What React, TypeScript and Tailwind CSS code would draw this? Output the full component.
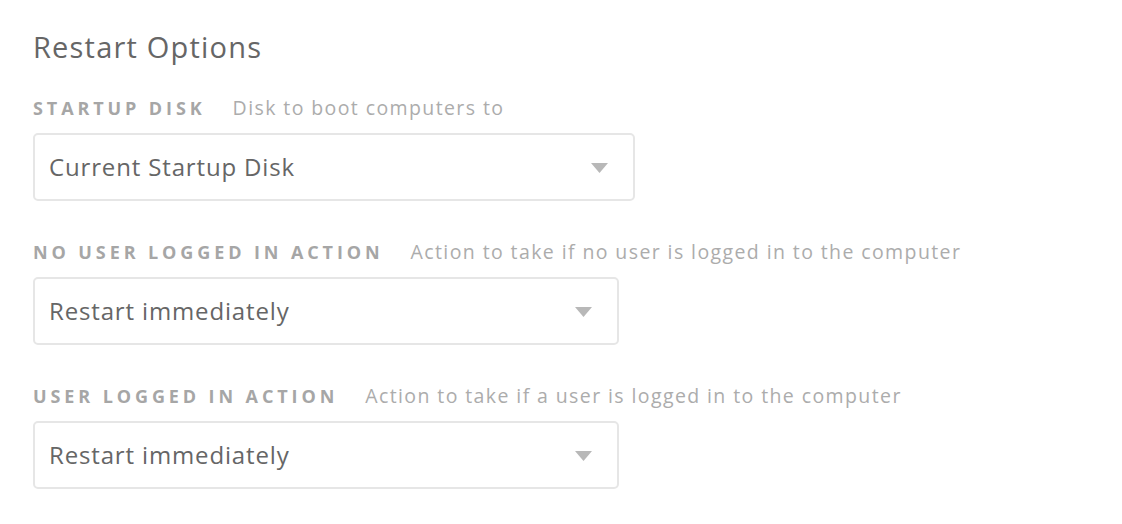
import React from "react";

function Select({ value, width }: { value: string; width: string }) {
  return (
    <div
      className={`flex h-[68px] items-center justify-between rounded-[5px] border-2 border-[#e6e6e6] bg-white pl-[14px] pr-[25px] ${width}`}
    >
      <span className="text-[24px] tracking-[0.85px] text-[#666666]">{value}</span>
      <svg width="17" height="10" viewBox="0 0 17 10" className="mt-[2px]">
        <polygon points="0,0 17,0 8.5,10" fill="#b8b8b8" />
      </svg>
    </div>
  );
}

function Field({
  label,
  desc,
  value,
  width,
}: {
  label: string;
  desc: string;
  value: string;
  width: string;
}) {
  return (
    <div className="flex flex-col">
      <div className="flex h-[30px] items-baseline gap-[27px]">
        <span className="text-[18px] font-bold tracking-[3.9px] text-[#a6a6a6]">{label}</span>
        <span className="text-[19.5px] tracking-[1.4px] text-[#acacac]">{desc}</span>
      </div>
      <div className="mt-[10px]">
        <Select value={value} width={width} />
      </div>
    </div>
  );
}

export default function App() {
  return (
    <div
      className="min-h-[524px] w-[1122px] bg-white pl-[33px] pt-[28px]"
      style={{ fontFamily: "'Open Sans', sans-serif" }}
    >
      <h1 className="text-[29px] leading-[38px] tracking-[1.2px] text-[#666666]">Restart Options</h1>
      <div className="mt-[27px] flex flex-col gap-[36px]">
        <Field
          label="STARTUP DISK"
          desc="Disk to boot computers to"
          value="Current Startup Disk"
          width="w-[602px]"
        />
        <Field
          label="NO USER LOGGED IN ACTION"
          desc="Action to take if no user is logged in to the computer"
          value="Restart immediately"
          width="w-[586px]"
        />
        <Field
          label="USER LOGGED IN ACTION"
          desc="Action to take if a user is logged in to the computer"
          value="Restart immediately"
          width="w-[586px]"
        />
      </div>
    </div>
  );
}
